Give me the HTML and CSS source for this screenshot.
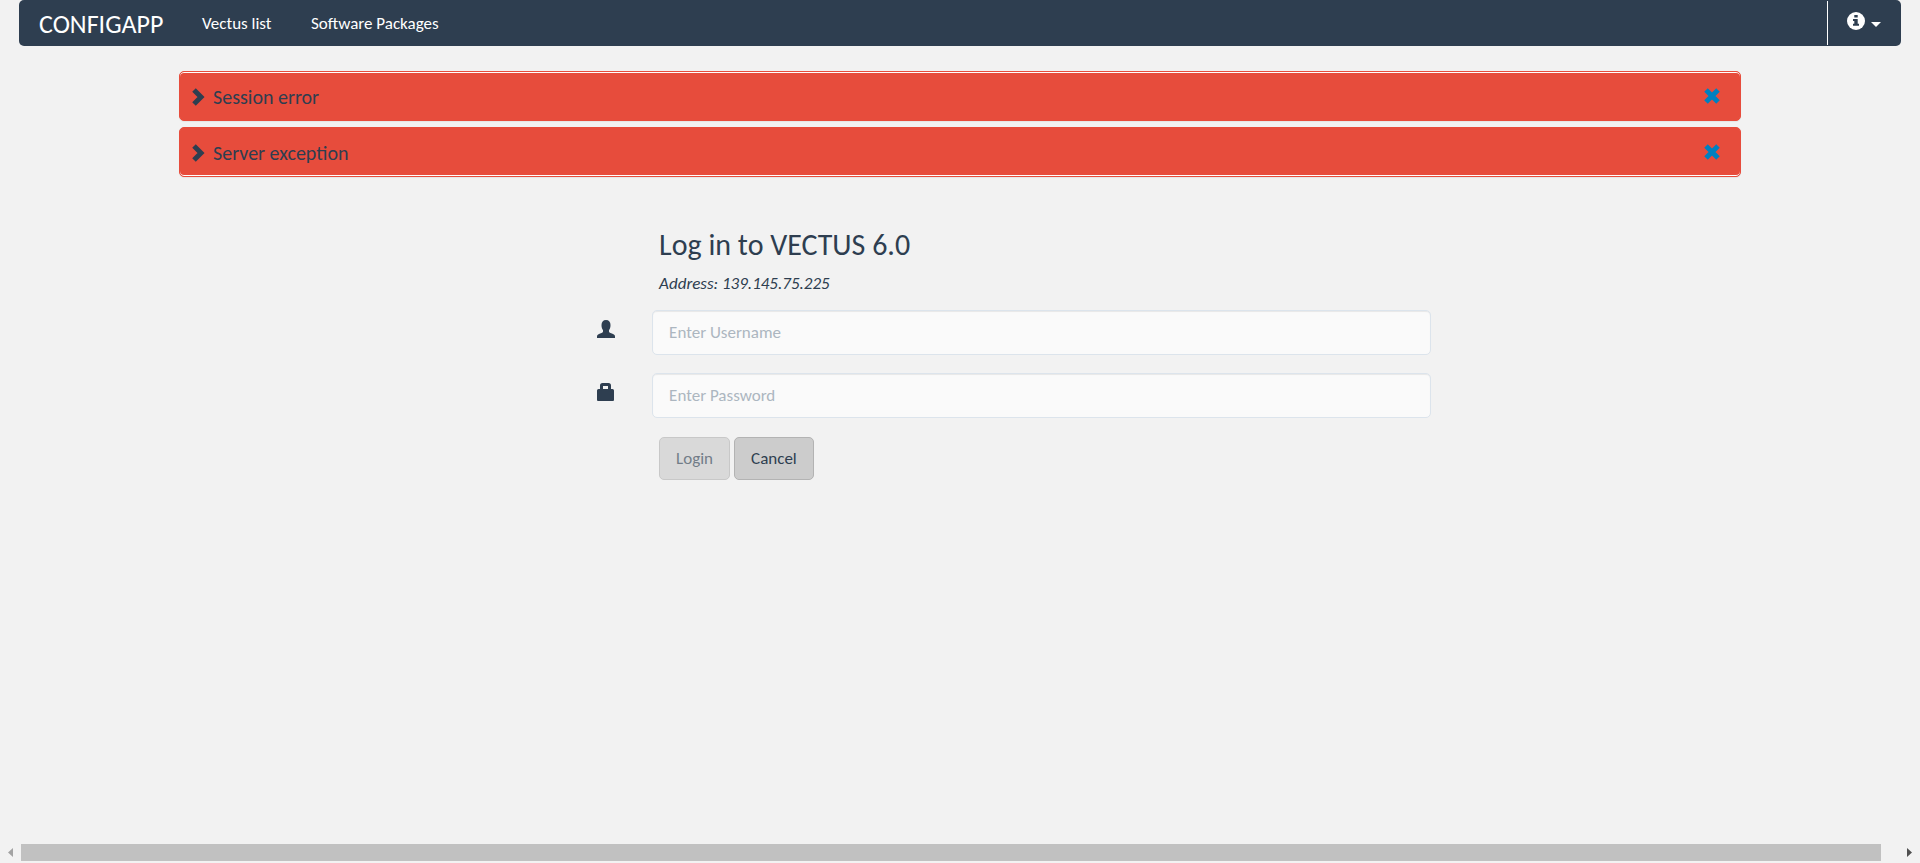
FILE: index.html
```html
<!DOCTYPE html>
<html lang="en">
<head>
<meta charset="utf-8">
<title>ConfigApp</title>
<link rel="stylesheet" href="styles.css">
</head>
<body>
<header class="navbar">
  <a class="brand" href="#">CONFIGAPP</a>
  <nav class="nav-links">
    <a class="nav-link vectus" href="#">Vectus list</a>
    <a class="nav-link" href="#">Software Packages</a>
  </nav>
  <button class="info-menu" type="button" aria-label="Information">
    <svg class="info-icon" viewBox="0 0 18 18" aria-hidden="true"><circle cx="9" cy="9" r="9" fill="#fff"/><path fill="#2e3e50" d="M7.3 3h3.4v2.6H7.3zM6 7h4.7v4.7H12v2H6v-2h1.3V9H6z"/></svg>
    <svg class="caret" viewBox="0 0 10 5" aria-hidden="true"><path fill="#fff" d="M0 0h10L5 5z"/></svg>
  </button>
</header>
<main class="content">
  <section class="alerts">
    <div class="alert alert-first">
      <button class="alert-toggle" type="button"><svg class="chevron" viewBox="0 0 13 18" aria-hidden="true"><path fill="none" stroke="#2e3e50" stroke-width="5" d="M2 2l7 7-7 7"/></svg>Session error</button>
      <button class="alert-close" type="button" aria-label="Close session error"><svg class="cross" viewBox="0 0 16 16" aria-hidden="true"><path stroke="#0080c0" stroke-width="5" d="M2 2l12 12M14 2L2 14"/></svg></button>
    </div>
    <div class="alert alert-last">
      <button class="alert-toggle" type="button"><svg class="chevron" viewBox="0 0 13 18" aria-hidden="true"><path fill="none" stroke="#2e3e50" stroke-width="5" d="M2 2l7 7-7 7"/></svg>Server exception</button>
      <button class="alert-close" type="button" aria-label="Close server exception"><svg class="cross" viewBox="0 0 16 16" aria-hidden="true"><path stroke="#0080c0" stroke-width="5" d="M2 2l12 12M14 2L2 14"/></svg></button>
    </div>
  </section>
  <form class="login">
    <div class="intro">
      <h1 class="title">Log in to VECTUS 6.0</h1>
      <p class="address">Address: 139.145.75.225</p>
    </div>
    <div class="field">
      <label class="field-label" for="user" aria-label="Username"><svg class="field-icon" viewBox="0 0 18 18" aria-hidden="true"><path fill="#2e3e50" d="M9 0c3 0 4.500 2 4.500 5 0 2.500-.6 4-1.500 5v1.500c0 .8.500 1 1.500 1.500 3 1 4.500 1.500 4.500 3.500V18H0v-1.500C0 14.500 1.500 14 4.500 13c1-.5 1.500-.7 1.500-1.500V10C5.100 9 4.500 7.500 4.500 5c0-3 1.500-5 4.500-5z"/></svg></label>
      <input class="input" id="user" type="text" placeholder="Enter Username">
    </div>
    <div class="field">
      <label class="field-label" for="pass" aria-label="Password"><svg class="field-icon" viewBox="0 0 18 18" aria-hidden="true"><path fill="#2e3e50" fill-rule="evenodd" d="M3 6V2.500Q3 0 5.500 0h6Q14 0 14 2.500V6h1.500Q17 6 17 7.500V17q0 1-1 1H1q-1 0-1-1V7.500Q0 6 1.500 6zM6 6h5V3H6z"/></svg></label>
      <input class="input" id="pass" type="password" placeholder="Enter Password">
    </div>
    <div class="actions">
      <button class="btn" type="submit" disabled>Login</button>
      <button class="btn" type="button">Cancel</button>
    </div>
  </form>
</main>
<div class="scrollbar" aria-hidden="true">
  <svg class="arrow" viewBox="0 0 5 9"><path fill="#a3a3a3" d="M5 0v9L0 4.500z"/></svg>
  <div class="thumb"></div>
  <svg class="arrow" viewBox="0 0 5 9"><path fill="#505050" d="M0 0v9l5-4.500z"/></svg>
</div>
</body>
</html>
```
FILE: styles.css
```css
* { box-sizing: border-box; }
body {
  margin: 0;
  min-height: 100vh;
  display: flex;
  flex-direction: column;
  background: #f2f2f2;
  color: #2e3e50;
  font: 17px/24px Calibri, Carlito, Lato, sans-serif;
}
button, input { font: inherit; color: inherit; }
button { cursor: pointer; }
svg { display: block; flex: none; }
.navbar {
  display: flex;
  align-items: stretch;
  height: 46px;
  margin: 0 19px;
  padding-left: 20px;
  background: #2e3e50;
  border-radius: 5px;
}
.brand, .nav-link {
  display: flex;
  align-items: center;
  padding-top: 2px;
  color: #fff;
  text-decoration: none;
}
.brand { width: 163px; font-size: 26px; }
.nav-links { display: flex; flex: 1; }
.vectus { width: 109px; }
.info-menu {
  display: flex;
  gap: 6px;
  width: 74px;
  margin: 1px 0;
  padding: 11px 0 0 19px;
  background: none;
  border: 0;
  border-left: 1px solid #fff;
}
.info-icon { width: 18px; height: 18px; }
.caret { width: 10px; height: 5px; margin-top: 10px; }
.content { flex: 1; }
.alerts {
  display: grid;
  gap: 6px;
  margin: 25px 179px 0;
}
.alert {
  display: flex;
  justify-content: space-between;
  align-items: center;
  height: 50px;
  padding: 0 20px 0 12px;
  background: #e74c3c;
  border: 1px solid #e74c3c;
  border-radius: 5px;
  box-shadow: 0 1px 1px rgba(0, 0, 0, .05);
}
.alert-first { box-shadow: inset 0 1px #fff, 0 1px 1px rgba(0, 0, 0, .05); }
.alert-last { box-shadow: inset 0 -1px #fff, 0 1px 1px rgba(0, 0, 0, .05); }
.alert-toggle, .alert-close {
  display: flex;
  align-items: center;
  padding: 0;
  background: none;
  border: 0;
}
.alert-toggle { gap: 8px; padding-top: 2px; font-size: 20px; }
.chevron { width: 13px; height: 18px; }
.cross { width: 16px; height: 16px; }
.login {
  display: grid;
  gap: 18px;
  padding: 49px 25.45% 0 31.1%;
}
.intro { height: 66px; padding-left: 62px; }
.title {
  margin: 0;
  font-size: 30px;
  font-weight: 400;
  line-height: 38px;
}
.address {
  margin: 8px 0 0;
  font-style: italic;
}
.field {
  display: grid;
  grid-template-columns: 55px minmax(0, 1fr);
}
.field-label { padding-top: 10px; }
.field-icon { width: 18px; height: 18px; }
.input {
  width: 100%;
  height: 45px;
  padding: 0 16px;
  background: #fafafa;
  border: 1px solid #dce4ec;
  border-radius: 5px;
  box-shadow: inset 0 1px 1px rgba(0, 0, 0, .075);
}
.input::placeholder { color: #acb6c0; opacity: 1; }
.actions {
  display: flex;
  gap: 4px;
  padding: 1px 0 0 62px;
}
.btn {
  height: 43px;
  padding: 0 16px;
  background: #ccc;
  border: 1px solid #b3b3b3;
  border-radius: 5px;
}
.btn:disabled { opacity: .65; cursor: default; color: #2e3e50; }
.scrollbar {
  display: flex;
  align-items: center;
  justify-content: space-between;
  height: 21px;
  padding: 0 8px;
}
.arrow { width: 5px; height: 9px; }
.thumb {
  flex: 1;
  height: 17px;
  margin: 0 26px 0 8px;
  background: #c1c1c1;
}
```
